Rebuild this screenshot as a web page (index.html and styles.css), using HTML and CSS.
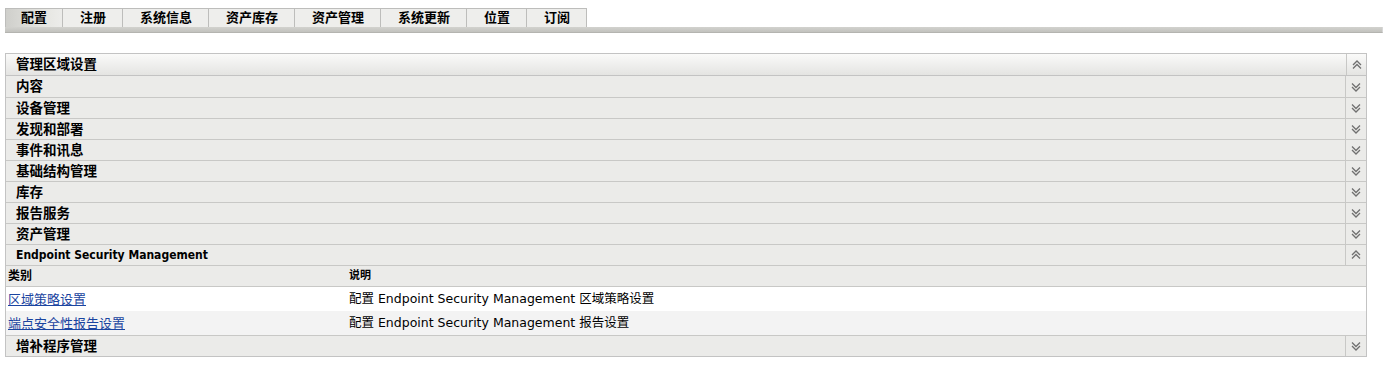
FILE: index.html
```html
<!DOCTYPE html>
<html lang="zh-CN">
<head>
    <meta charset="UTF-8">
    <title>配置</title>
    <link rel="stylesheet" href="styles.css">
</head>
<body>
    <div class="page">
        <div class="tabs">
            <div class="tab active">配置</div>
            <div class="tab">注册</div>
            <div class="tab">系统信息</div>
            <div class="tab">资产库存</div>
            <div class="tab">资产管理</div>
            <div class="tab">系统更新</div>
            <div class="tab">位置</div>
            <div class="tab">订阅</div>
        </div>
        <div class="tab-bar"></div>

        <div class="panel">
            <div class="head top"><span class="title">管理区域设置</span><span class="toggle up"></span></div>
            <div class="head"><span class="title">内容</span><span class="toggle"></span></div>
            <div class="head"><span class="title">设备管理</span><span class="toggle"></span></div>
            <div class="head"><span class="title">发现和部署</span><span class="toggle"></span></div>
            <div class="head"><span class="title">事件和讯息</span><span class="toggle"></span></div>
            <div class="head"><span class="title">基础结构管理</span><span class="toggle"></span></div>
            <div class="head"><span class="title">库存</span><span class="toggle"></span></div>
            <div class="head"><span class="title">报告服务</span><span class="toggle"></span></div>
            <div class="head"><span class="title">资产管理</span><span class="toggle"></span></div>
            <div class="head"><span class="title latin">Endpoint Security Management</span><span class="toggle up"></span></div>
            <div class="grid-row cols">
                <div class="c1">类别</div>
                <div class="c2">说明</div>
            </div>
            <div class="grid-row item">
                <div class="c1"><a href="#">区域策略设置</a></div>
                <div class="c2">配置 Endpoint Security Management 区域策略设置</div>
            </div>
            <div class="grid-row item alt">
                <div class="c1"><a href="#">端点安全性报告设置</a></div>
                <div class="c2">配置 Endpoint Security Management 报告设置</div>
            </div>
            <div class="head last"><span class="title">增补程序管理</span><span class="toggle"></span></div>
        </div>
    </div>
</body>
</html>
```

FILE: styles.css
```css
* {
    margin: 0;
    padding: 0;
    box-sizing: border-box;
}

body {
    background: #fff;
    font-family: "DejaVu Sans", "Noto Sans CJK SC", sans-serif;
    color: #000;
}

.page {
    padding: 8px 6px 0 5px;
}

/* tabs */
.tabs {
    display: flex;
}

.tab {
    height: 19px;
    padding: 0 16px 0 17px;
    font-size: 13px;
    font-weight: bold;
    line-height: 18px;
    background: #eeeeec;
    border: 1px solid #bdbdbb;
    border-bottom: none;
    border-left: none;
}

.tab:first-child {
    padding: 0 15px;
    border-left: 1px solid #bdbdbb;
}

.tab.active {
    background: linear-gradient(90deg, #cfcfcb, #e6e6e2 70%, #ececea);
}

.tab-bar {
    height: 6px;
    background: linear-gradient(#d2d2ce, #c2c2be);
    border-bottom: 1px solid #b4b4b0;
    border-right: 1px solid #d8d8d8;
}

/* panel */
.panel {
    margin-top: 20px;
    width: 1362px;
    border: 1px solid #c3c3c3;
    border-top: none;
}

.head {
    display: flex;
    height: 21px;
    background: #ebebe9;
    border-top: 1px solid #c8c8c6;
}

.head.top {
    height: 23px;
    background: linear-gradient(#fafaf9, #e4e4e2);
    border-top: 1px solid #c3c3c3;
    border-bottom: 1px solid #c3c3c3;
}

.head.top + .head {
    border-top: none;
}

.title {
    flex: 1;
    padding-left: 10px;
    font-size: 13.5px;
    font-weight: bold;
    line-height: 20px;
}

.title.latin {
    font-family: "DejaVu Sans Condensed", "DejaVu Sans", sans-serif;
    font-size: 12px;
}

.toggle {
    width: 21px;
    border-left: 1px solid #c8c8c6;
    background-repeat: no-repeat;
    background-position: center;
    background-image: url("data:image/svg+xml;utf8,<svg xmlns='http://www.w3.org/2000/svg' width='10' height='10'><path d='M1 1.5l4 4 4-4M1 5l4 4 4-4' fill='none' stroke='%23707070' stroke-width='1.3'/></svg>");
}

.toggle.up {
    background-image: url("data:image/svg+xml;utf8,<svg xmlns='http://www.w3.org/2000/svg' width='10' height='10'><path d='M1 5l4-4 4 4M1 8.5l4-4 4 4' fill='none' stroke='%23707070' stroke-width='1.3'/></svg>");
}

.head.top .toggle {
    width: 20px;
}

/* table */
.grid-row {
    display: grid;
    grid-template-columns: 340px 1fr;
    border-top: 1px solid #c8c8c6;
}

.grid-row.cols {
    height: 21px;
    background: #ebebe9;
    font-size: 12px;
    font-weight: bold;
    line-height: 20px;
}

.grid-row.item {
    height: 25px;
    background: #fff;
    font-size: 12.5px;
    line-height: 24px;
}

.grid-row.item.alt {
    height: 24px;
    background: #f3f3f3;
    border-top: none;
}

.c1 {
    padding-left: 2px;
}

.c2 {
    padding-left: 3px;
}

.cols .c2 {
    font-size: 11px;
}

a {
    font-family: "Noto Sans CJK SC", sans-serif;
    font-size: 13px;
    color: #1a44a0;
    text-decoration: underline;
}
```
